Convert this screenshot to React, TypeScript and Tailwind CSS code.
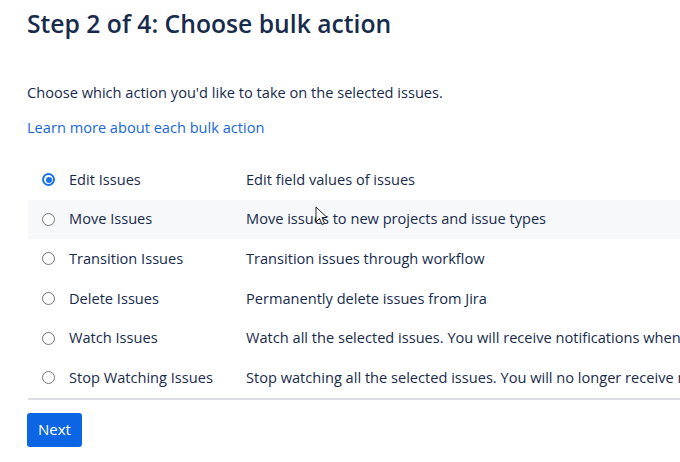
import { useState } from 'react';

interface BulkAction {
  id: string;
  label: string;
  description: string;
}

const actions: BulkAction[] = [
  { id: 'edit', label: 'Edit Issues', description: 'Edit field values of issues' },
  { id: 'move', label: 'Move Issues', description: 'Move issues to new projects and issue types' },
  { id: 'transition', label: 'Transition Issues', description: 'Transition issues through workflow' },
  { id: 'delete', label: 'Delete Issues', description: 'Permanently delete issues from Jira' },
  {
    id: 'watch',
    label: 'Watch Issues',
    description: 'Watch all the selected issues. You will receive notifications when any of these issues are updated',
  },
  {
    id: 'unwatch',
    label: 'Stop Watching Issues',
    description: 'Stop watching all the selected issues. You will no longer receive notifications for these issues',
  },
];

function Radio({ checked }: { checked: boolean }) {
  if (checked) {
    return (
      <span className="flex h-[13px] w-[13px] items-center justify-center rounded-full border-2 border-[#1a73e8] bg-white">
        <span className="h-[6px] w-[6px] rounded-full bg-[#1a73e8]" />
      </span>
    );
  }
  return <span className="block h-[13px] w-[13px] rounded-full border border-[#767676] bg-white" />;
}

function Cursor() {
  return (
    <svg
      className="pointer-events-none absolute left-[315px] top-[206px]"
      width="13"
      height="20"
      viewBox="0 0 13 20"
    >
      <path d="M1 1 L1 16 L4.5 12.5 L7 18.5 L9.5 17.5 L7 11.5 L12 11.5 Z" fill="white" stroke="#222" strokeWidth="1" strokeLinejoin="round" />
    </svg>
  );
}

export default function App() {
  const [selected, setSelected] = useState('edit');

  return (
    <div
      className="relative h-[462px] w-[680px] overflow-hidden bg-white text-[#172b4d]"
      style={{ fontFamily: '"Open Sans", "Noto Sans", sans-serif' }}
    >
      <div className="pl-[27px] pt-[8px]">
        <h2 className="text-[24.7px] font-semibold leading-[32px]">Step 2 of 4: Choose bulk action</h2>

        <p className="mt-[42px] text-[14.6px] leading-[20px]">
          Choose which action you'd like to take on the selected issues.
        </p>
        <a href="#" className="mt-[15px] block text-[14.6px] leading-[20px] text-[#1868db]">
          Learn more about each bulk action
        </a>

        {/* 操作列表 */}
        <div className="ml-[1px] mt-[23px] w-[900px] border-b-2 border-[#dcdfe4]">
          {actions.map((action) => (
            <div
              key={action.id}
              onClick={() => setSelected(action.id)}
              className={`flex h-[39.6px] items-center whitespace-nowrap text-[14.6px] ${
                action.id === 'move' ? 'bg-[#f7f8f9]' : ''
              }`}
            >
              <div className="flex w-[27px] justify-end">
                <Radio checked={selected === action.id} />
              </div>
              <div className="w-[191px] pl-[14px]">{action.label}</div>
              <div>{action.description}</div>
            </div>
          ))}
        </div>

        <button className="mt-[13px] h-[34px] rounded-[3px] bg-[#0c66e4] px-[11px] text-[15px] font-medium text-white">
          Next
        </button>
      </div>
      <Cursor />
    </div>
  );
}
